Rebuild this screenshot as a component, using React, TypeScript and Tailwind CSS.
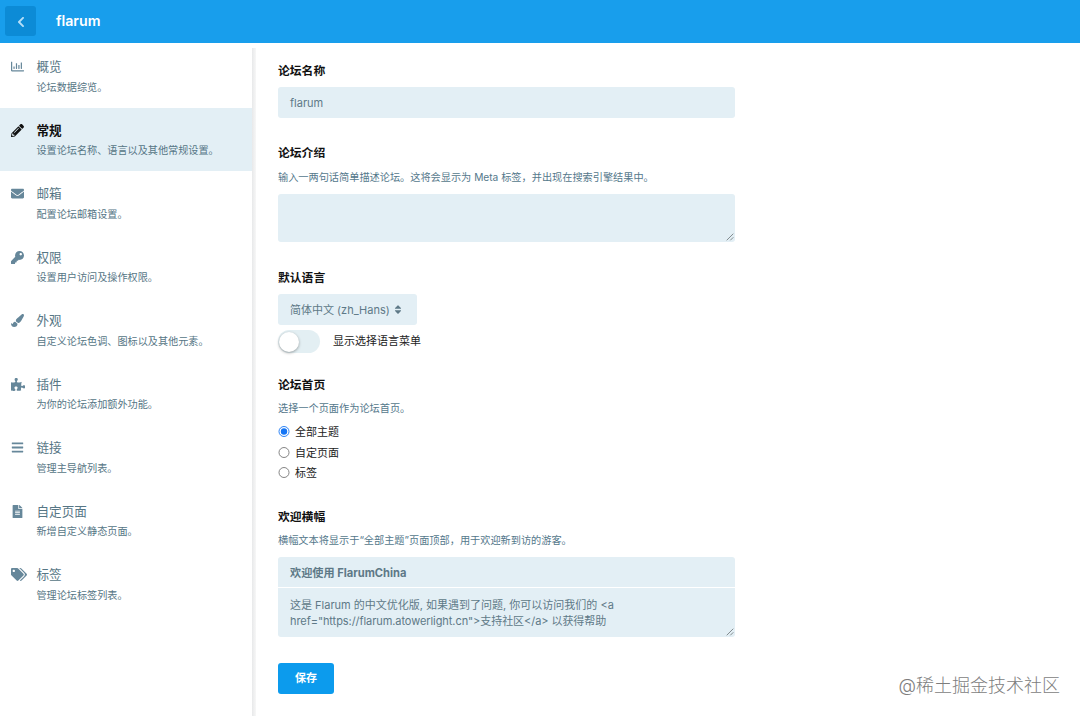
import type { ReactNode } from 'react';
import type { IconType } from 'react-icons';
import {
  FaBars,
  FaChevronLeft,
  FaEnvelope,
  FaFileAlt,
  FaKey,
  FaPaintBrush,
  FaPencilAlt,
  FaPuzzlePiece,
  FaRegChartBar,
  FaSort,
  FaTags,
} from 'react-icons/fa';

type NavItem = { icon: IconType; iconWidth: string; title: string; description: string; active?: boolean };

const navItems: NavItem[] = [
  { icon: FaRegChartBar, iconWidth: 'w-[13px]', title: '概览', description: '论坛数据综览。' },
  { icon: FaPencilAlt, iconWidth: 'w-[13px]', title: '常规', description: '设置论坛名称、语言以及其他常规设置。', active: true },
  { icon: FaEnvelope, iconWidth: 'w-[13px]', title: '邮箱', description: '配置论坛邮箱设置。' },
  { icon: FaKey, iconWidth: 'w-[13px]', title: '权限', description: '设置用户访问及操作权限。' },
  { icon: FaPaintBrush, iconWidth: 'w-[13px]', title: '外观', description: '自定义论坛色调、图标以及其他元素。' },
  { icon: FaPuzzlePiece, iconWidth: 'w-[14.4px]', title: '插件', description: '为你的论坛添加额外功能。' },
  { icon: FaBars, iconWidth: 'w-[13px]', title: '链接', description: '管理主导航列表。' },
  { icon: FaFileAlt, iconWidth: 'w-[13px]', title: '自定页面', description: '新增自定义静态页面。' },
  { icon: FaTags, iconWidth: 'w-[16px]', title: '标签', description: '管理论坛标签列表。' },
];

const homeOptions = ['全部主题', '自定页面', '标签'];

function Header() {
  return (
    <header className="flex h-[43px] shrink-0 items-start bg-[#189eec] pl-[5px] pt-[6px]">
      <button className="flex h-[30px] w-[31px] items-center justify-center rounded-[3px] bg-[#0c8bd6] text-[#b5def8]">
        <FaChevronLeft className="mt-[2px] size-[12px]" />
      </button>
      <h1 className="ml-[20px] pt-px text-[14.2px] leading-[28px] font-semibold text-white">flarum</h1>
    </header>
  );
}

function NavRow({ icon: Icon, iconWidth, title, description, active }: NavItem) {
  return (
    <li className={active ? 'flex h-[63.5px] bg-[#e3eff5] pl-[11px] pt-[14px]' : 'flex h-[63.5px] pl-[11px] pt-[14px]'}>
      <span className={active ? 'flex h-[17px] w-[25.5px] items-center text-[#111]' : 'flex h-[17px] w-[25.5px] items-center text-[#66879a]'}>
        <Icon className={`h-[13px] shrink-0 ${iconWidth}`} />
      </span>
      <div>
        <div className={active ? 'text-[12.6px] leading-[18px] font-bold text-[#111]' : 'text-[12.6px] leading-[18px] text-[#567685]'}>{title}</div>
        <div className="mt-[1.5px] text-[10.15px] leading-[18px] whitespace-nowrap text-[#567685]">{description}</div>
      </div>
    </li>
  );
}

function Label({ children }: { children: ReactNode }) {
  return <div className="h-[18px] pt-[0.5px] text-[11.8px] leading-[18px] font-bold text-[#111]">{children}</div>;
}

function Help({ children }: { children: ReactNode }) {
  return <div className="mt-[7px] h-[16px] text-[10.18px] leading-[16px] whitespace-nowrap text-[#54788b]">{children}</div>;
}

function ResizeGrip() {
  return (
    <svg className="size-[8px]" viewBox="0 0 8 8" fill="none" stroke="#777f83" strokeWidth="0.9">
      <path d="M0.7 7.3 7.3 0.7M4.3 7.3l3-3" />
    </svg>
  );
}

function Toggle() {
  return (
    <span className="flex h-[23px] w-[42px] items-center rounded-full bg-[#e3eff3] pl-[1px]">
      <span className="size-[20px] rounded-full bg-white shadow-[0_1px_3px_rgba(0,0,0,0.35)]" />
    </span>
  );
}

function Radio({ checked }: { checked: boolean }) {
  return (
    <svg className="-ml-[0.5px] size-[12px]" viewBox="0 0 12 12">
      <circle cx="6" cy="5.5" r="5" fill="white" stroke={checked ? '#1475f5' : '#777'} strokeWidth="0.9" />
      {checked && <circle cx="6" cy="5.5" r="3.2" fill="#1475f5" />}
    </svg>
  );
}

function SettingsForm() {
  return (
    <main className="flex w-[457px] flex-col pt-[18px] text-[11px] text-[#5e7987]">
      <section className="h-[82.5px]">
        <Label>论坛名称</Label>
        <div className="mt-[8px] h-[31px] rounded-[3px] bg-[#e3eff5] pl-[12px] pt-[0.5px] leading-[31px]">flarum</div>
      </section>

      <section className="h-[124.5px]">
        <Label>论坛介绍</Label>
        <Help>输入一两句话简单描述论坛。这将会显示为 Meta 标签，并出现在搜索引擎结果中。</Help>
        <div className="mt-[9px] flex h-[48.5px] items-end justify-end rounded-[3px] bg-[#e3eff5] p-[1px]">
          <ResizeGrip />
        </div>
      </section>

      <section className="h-[107px]">
        <Label>默认语言</Label>
        <button className="mt-[8px] flex h-[30.5px] w-[139px] items-center rounded-[3px] bg-[#e3eff5] pl-[12px]">
          <span className="w-[103px] pt-px text-left whitespace-nowrap">简体中文 (zh_Hans)</span>
          <FaSort className="h-[11px] w-[10px]" />
        </button>
        <div className="mt-[5.5px] flex h-[23px] items-center gap-[13px] text-[#222]">
          <Toggle />
          <span>显示选择语言菜单</span>
        </div>
      </section>

      <section className="h-[132px]">
        <Label>论坛首页</Label>
        <Help>选择一个页面作为论坛首页。</Help>
        <div className="mt-[6px] flex flex-col text-[#222]">
          {homeOptions.map((option, index) => (
            <div key={option} className="flex h-[20.4px] items-center gap-[5.5px]">
              <Radio checked={index === 0} />
              <span className="pt-px">{option}</span>
            </div>
          ))}
        </div>
      </section>

      <section>
        <Label>欢迎横幅</Label>
        <Help>横幅文本将显示于“全部主题”页面顶部，用于欢迎新到访的游客。</Help>
        <div className="mt-[9px] h-[30px] rounded-t-[3px] bg-[#e3eff5] pt-[0.5px] pl-[12px] text-[11.15px] leading-[30px] font-bold">欢迎使用 FlarumChina</div>
        <div className="mt-[1px] flex h-[49px] items-end justify-between rounded-b-[3px] bg-[#e3eff5] p-[1px] pl-[12px]">
          <p className="self-start pt-[8px] leading-[16px] whitespace-nowrap">
            这是 Flarum 的中文优化版, 如果遇到了问题, 你可以访问我们的 &lt;a
            <br />
            <span className="tracking-[-0.07px]">href="https://flarum.atowerlight.cn"&gt;支持社区&lt;/a&gt; 以获得帮助</span>
          </p>
          <ResizeGrip />
        </div>
      </section>

      <button className="mt-[26px] h-[30.5px] w-[56px] rounded-[3px] bg-[#0c9bed] text-[11px] font-bold text-white">保存</button>
    </main>
  );
}

export default function App() {
  return (
    <div className="relative flex h-[716px] w-[1080px] flex-col overflow-hidden bg-white font-['Inter','Noto_Sans_CJK_SC',sans-serif]">
      <Header />
      <div className="flex min-h-0 flex-1">
        <nav className="w-[252px] shrink-0 pt-[1px]">
          <ul>
            {navItems.map((item) => (
              <NavRow key={item.title} {...item} />
            ))}
          </ul>
        </nav>
        <div className="mt-[5px] mr-[22px] w-[4px] shrink-0 bg-linear-to-r from-[#e8e9ea] to-[#f7f7f7]" />
        <SettingsForm />
      </div>
      <div className="absolute right-[20px] bottom-[18px] text-[18px] leading-[24px] font-light whitespace-nowrap text-[#7d7d7d]">
        @稀土掘金技术社区
      </div>
    </div>
  );
}
